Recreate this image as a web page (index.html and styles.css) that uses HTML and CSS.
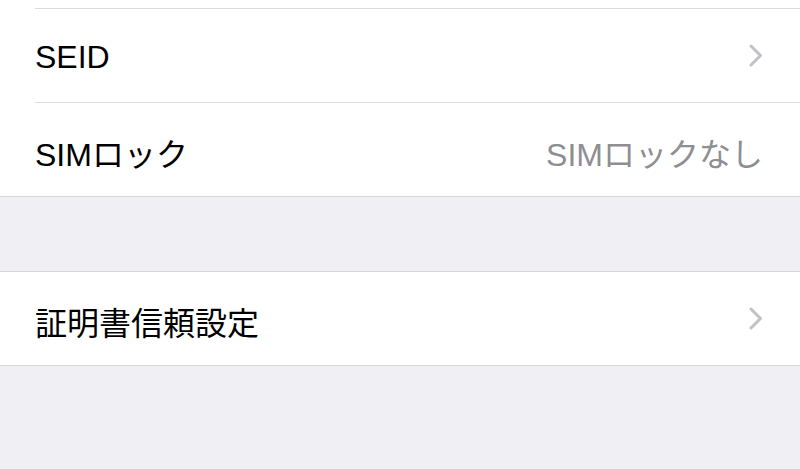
FILE: index.html
```html
<!DOCTYPE html>
<html lang="ja">

<head>
    <meta charset="UTF-8">
    <meta name="viewport" content="width=device-width, initial-scale=1.0">
    <title>情報</title>
    <link rel="stylesheet" href="styles.css">
</head>

<body>
    <div class="group">
        <div class="cell cell-cut"></div>
        <div class="cell">
            <span class="label">SEID</span>
            <svg class="chevron" width="14" height="23" viewBox="0 0 14 23">
                <polyline points="2,2 11.5,11.5 2,21" />
            </svg>
        </div>
        <div class="cell">
            <span class="label">SIMロック</span>
            <span class="value">SIMロックなし</span>
        </div>
    </div>

    <div class="spacer"></div>

    <div class="group">
        <div class="cell">
            <span class="label">証明書信頼設定</span>
            <svg class="chevron" width="14" height="23" viewBox="0 0 14 23">
                <polyline points="2,2 11.5,11.5 2,21" />
            </svg>
        </div>
    </div>
</body>

</html>
```

FILE: styles.css
```css
body {
    margin: 0;
    background-color: #efeff4;
    font-family: "Liberation Sans", "Noto Sans CJK JP", sans-serif;
    color: #000;
}

.group {
    background-color: #fff;
    border-bottom: 1px solid #d6d6da;
}

.group + .spacer + .group {
    border-top: 1px solid #d6d6da;
}

.cell {
    display: flex;
    align-items: center;
    justify-content: space-between;
    height: 93px;
    margin-left: 35px;
    padding-right: 37px;
    border-bottom: 1px solid #dcdce0;
    font-size: 32px;
}

.cell:last-child {
    border-bottom: none;
}

.cell-cut {
    height: 8px;
}

.label {
    padding-top: 4px;
}

.value {
    padding-top: 4px;
    color: #8e8e93;
}

.chevron polyline {
    fill: none;
    stroke: #c2c2c6;
    stroke-width: 3;
    stroke-linecap: round;
    stroke-linejoin: round;
}

.spacer {
    height: 74px;
}
```
